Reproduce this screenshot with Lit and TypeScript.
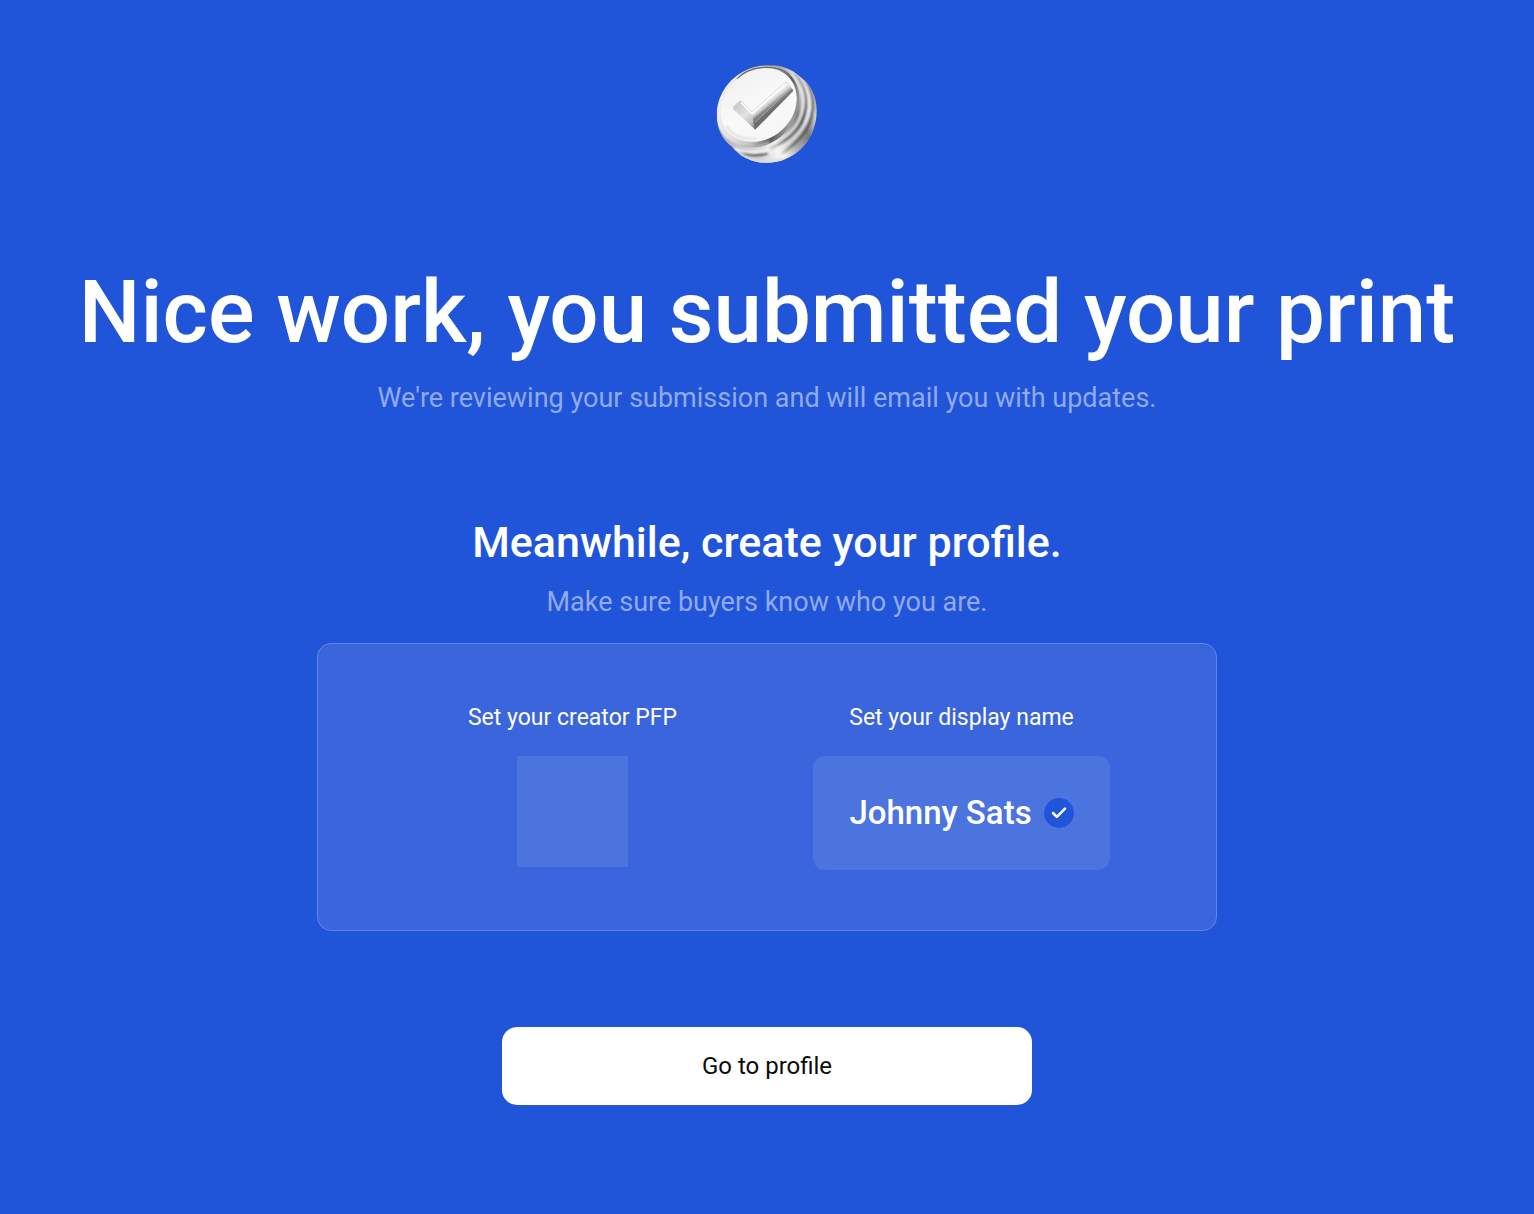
import { LitElement, html, css, svg } from "lit";
import { customElement, state } from "lit/decorators.js";

const coin = svg`
  <defs>
    <linearGradient id="base" gradientUnits="userSpaceOnUse" x1="60" y1="290" x2="335" y2="140">
      <stop offset="0" stop-color="#b4b4b4" />
      <stop offset="0.28" stop-color="#d8d8d8" />
      <stop offset="0.45" stop-color="#fafafa" />
      <stop offset="0.6" stop-color="#b0b0b0" />
      <stop offset="0.76" stop-color="#7a7a7a" />
      <stop offset="0.9" stop-color="#cfcfcf" />
      <stop offset="1" stop-color="#b0b0b0" />
    </linearGradient>
    <linearGradient id="dark" gradientUnits="userSpaceOnUse" x1="290" y1="60" x2="190" y2="300">
      <stop offset="0" stop-color="#666666" stop-opacity="0.6" />
      <stop offset="0.5" stop-color="#555555" />
      <stop offset="0.8" stop-color="#5c5c5c" stop-opacity="0.8" />
      <stop offset="1" stop-color="#666666" stop-opacity="0" />
    </linearGradient>
    <linearGradient id="light" gradientUnits="userSpaceOnUse" x1="290" y1="60" x2="200" y2="300">
      <stop offset="0" stop-color="#ffffff" stop-opacity="0.7" />
      <stop offset="0.5" stop-color="#f4f4f4" />
      <stop offset="1" stop-color="#e8e8e8" stop-opacity="0.5" />
    </linearGradient>
    <linearGradient id="rim" gradientUnits="userSpaceOnUse" x1="40" y1="170" x2="240" y2="240">
      <stop offset="0" stop-color="#eeeeee" />
      <stop offset="0.35" stop-color="#dcdcdc" />
      <stop offset="0.58" stop-color="#c0c0c0" />
      <stop offset="0.82" stop-color="#5a5a5a" />
      <stop offset="1" stop-color="#9c9c9c" />
    </linearGradient>
    <linearGradient id="face" x1="0.2" y1="0.1" x2="0.8" y2="1">
      <stop offset="0" stop-color="#f1f1f1" />
      <stop offset="0.5" stop-color="#fafafa" />
      <stop offset="1" stop-color="#f5f5f5" />
    </linearGradient>
    <linearGradient id="arm" gradientUnits="userSpaceOnUse" x1="188" y1="136" x2="207" y2="160">
      <stop offset="0" stop-color="#f4f4f4" />
      <stop offset="0.35" stop-color="#d0d0d0" />
      <stop offset="0.65" stop-color="#868686" />
      <stop offset="1" stop-color="#6e6e6e" />
    </linearGradient>
    <linearGradient id="foot" gradientUnits="userSpaceOnUse" x1="85" y1="150" x2="148" y2="222">
      <stop offset="0" stop-color="#c9c9c9" />
      <stop offset="0.5" stop-color="#e2e2e2" />
      <stop offset="0.8" stop-color="#bdbdbd" />
      <stop offset="1" stop-color="#7c7c7c" />
    </linearGradient>
    <filter id="soft" filterUnits="userSpaceOnUse" x="0" y="0" width="366" height="366">
      <feGaussianBlur stdDeviation="2.4" />
    </filter>
    <filter id="fine" filterUnits="userSpaceOnUse" x="0" y="0" width="366" height="366">
      <feGaussianBlur stdDeviation="1.3" />
    </filter>
    <clipPath id="outline">
      <path d="M180 34C222 32 256 46 281 69C314 91 332 130 331 174C330 238 294 294 237 316C205 331 158 332 124 315C104 307 92 296 77 279C47 257 31 224 31 184C31 104 98 38 180 34Z" />
    </clipPath>
    <clipPath id="front">
      <path d="M180 36C236 34 277 75 279 132C281 207 219 276 146 281C82 284 32 246 32 184C32 105 98 39 180 36Z" />
    </clipPath>
  </defs>
  <g clip-path="url(#outline)">
    <rect x="28" y="30" width="310" height="306" fill="url(#base)" />
    <g fill="none" filter="url(#soft)">
      <path d="M268 50C316 90 332 150 308 210C294 246 266 274 222 302" stroke="url(#dark)" stroke-width="8" />
      <path d="M262 50C308 92 322 150 298 205C284 238 256 264 212 290" stroke="url(#light)" stroke-width="9" />
      <path d="M262 60C300 98 310 150 288 200C272 236 242 262 192 284" stroke="url(#dark)" stroke-width="9" />
      <path d="M258 60C290 98 300 145 280 194C266 228 236 256 190 276" stroke="url(#light)" stroke-width="7" />
      <path d="M108 296C130 309 156 306 184 299" stroke="#4e4e4e" stroke-width="7" />
      <path d="M84 284C112 298 150 298 188 290" stroke="#f6f6f6" stroke-width="8" />
      <path d="M100 304C140 330 190 334 236 314" stroke="#e0e0e0" stroke-width="10" />
    </g>
    <g clip-path="url(#front)">
      <rect x="30" y="30" width="256" height="256" fill="url(#rim)" />
      <g fill="none" filter="url(#soft)">
        <path d="M60 258C90 286 140 290 190 266" stroke="#b2b2b2" stroke-width="8" />
        <path d="M262 62C284 96 282 150 264 190" stroke="#8a8a8a" stroke-width="5" />
      </g>
    </g>
    <path d="M92 76C126 38 206 26 250 64" fill="none" stroke="#6e6e6e" stroke-width="4" filter="url(#fine)" />
    <path d="M176 44C229 42 270 78 271 130C273 199 215 259 146 264C90 267 45 235 44 181C43 108 104 47 176 44Z" fill="url(#face)" filter="url(#fine)" />
    <path d="M60 216C78 248 112 259 150 254" fill="none" stroke="#e2e2e2" stroke-width="7" filter="url(#soft)" />
  </g>
  <g filter="url(#fine)">
    <path d="M80 161L98 144Q102 141 107 146L143 182L147 228L80 167Z" fill="url(#foot)" />
    <path d="M137 181L236 89Q240 86 244 91L260 108Q262 112 257 116L151 224Q148 228 145 227Z" fill="url(#arm)" />
    <path d="M148 205L252 104" fill="none" stroke="#c8c8c8" stroke-width="2" />
    <path d="M105 147L137 180L236 90" fill="none" stroke="#ffffff" stroke-width="5" />
  </g>
  <path d="M80 161L98 143Q102 140 107 145L137 175L236 87Q240 84 244 89L258 105" fill="none" stroke="#c9c9c9" stroke-width="2" />
`;

@customElement("app-root")
export class AppRoot extends LitElement {
  static styles = css`
    :host {
      display: block;
      min-height: 100vh;
      box-sizing: border-box;
      background: #2155d9;
      color: #ffffff;
      font-family: Roboto, "Liberation Sans", sans-serif;
    }
    .page {
      display: flex;
      flex-direction: column;
      align-items: center;
      padding: 64px 24px;
      text-align: center;
    }
    .coin {
      width: 102px;
      height: 102px;
    }
    .title,
    .subtitle,
    .lead {
      margin: 0;
    }
    .title {
      margin-top: 88px;
      font-size: 87px;
      line-height: 116px;
      font-weight: 500;
    }
    .lead {
      font-size: 27px;
      line-height: 40px;
      color: #90aaec;
    }
    .title + .lead {
      margin-top: 8px;
    }
    .subtitle {
      margin-top: 96px;
      font-size: 43px;
      line-height: 56px;
      font-weight: 500;
    }
    .subtitle + .lead {
      margin-top: 12px;
    }
    .card {
      display: grid;
      grid-template-columns: 1fr 1fr;
      width: 100%;
      max-width: 900px;
      box-sizing: border-box;
      margin-top: 21px;
      padding: 60px;
      border: 1px solid #6383e2;
      border-radius: 14px;
      background: #3a65dc;
    }
    .field {
      display: flex;
      flex-direction: column;
      align-items: center;
      gap: 24px;
    }
    .label {
      font-size: 23px;
      line-height: 28px;
    }
    .picture {
      width: 111px;
      height: 111px;
      padding: 0;
      border: 0;
      background: #4c74de;
      cursor: pointer;
    }
    .name {
      display: flex;
      align-items: center;
      gap: 12px;
      height: 114px;
      box-sizing: border-box;
      padding: 0 36px;
      border-radius: 12px;
      background: #4c74de;
    }
    .name-input {
      field-sizing: content;
      padding: 0;
      border: 0;
      outline: 0;
      background: transparent;
      color: inherit;
      font: 500 33px/44px Roboto, "Liberation Sans", sans-serif;
    }
    .badge {
      width: 30px;
      height: 30px;
    }
    .go {
      width: 100%;
      max-width: 530px;
      margin-top: 96px;
      padding: 24px;
      border: 0;
      border-radius: 15px;
      background: #ffffff;
      color: #0b0b0b;
      font: 400 24px/30px Roboto, "Liberation Sans", sans-serif;
      cursor: pointer;
    }
  `;

  @state() private displayName = "Johnny Sats";

  private rename(event: Event) {
    this.displayName = (event.target as HTMLInputElement).value;
  }

  render() {
    return html`
      <main class="page">
        <svg class="coin" viewBox="29 31 306 306" aria-hidden="true">${coin}</svg>
        <h1 class="title">Nice work, you submitted your print</h1>
        <p class="lead">We're reviewing your submission and will email you with updates.</p>
        <h2 class="subtitle">Meanwhile, create your profile.</h2>
        <p class="lead">Make sure buyers know who you are.</p>
        <section class="card">
          <div class="field">
            <label class="label" id="picture-label" for="picture">Set your creator PFP</label>
            <button class="picture" id="picture" type="button" aria-labelledby="picture-label"></button>
          </div>
          <div class="field">
            <label class="label" for="display-name">Set your display name</label>
            <div class="name">
              <input
                class="name-input"
                id="display-name"
                type="text"
                .value=${this.displayName}
                @input=${this.rename}
              />
              <svg class="badge" viewBox="0 0 30 30" aria-hidden="true">
                <circle cx="15" cy="15" r="15" fill="#2155d9" />
                <path
                  d="M9 15L12.8 18.8L21 10.6"
                  fill="none"
                  stroke="#ffffff"
                  stroke-width="2.5"
                  stroke-linecap="round"
                  stroke-linejoin="round"
                />
              </svg>
            </div>
          </div>
        </section>
        <button class="go" type="button">Go to profile</button>
      </main>
    `;
  }
}
